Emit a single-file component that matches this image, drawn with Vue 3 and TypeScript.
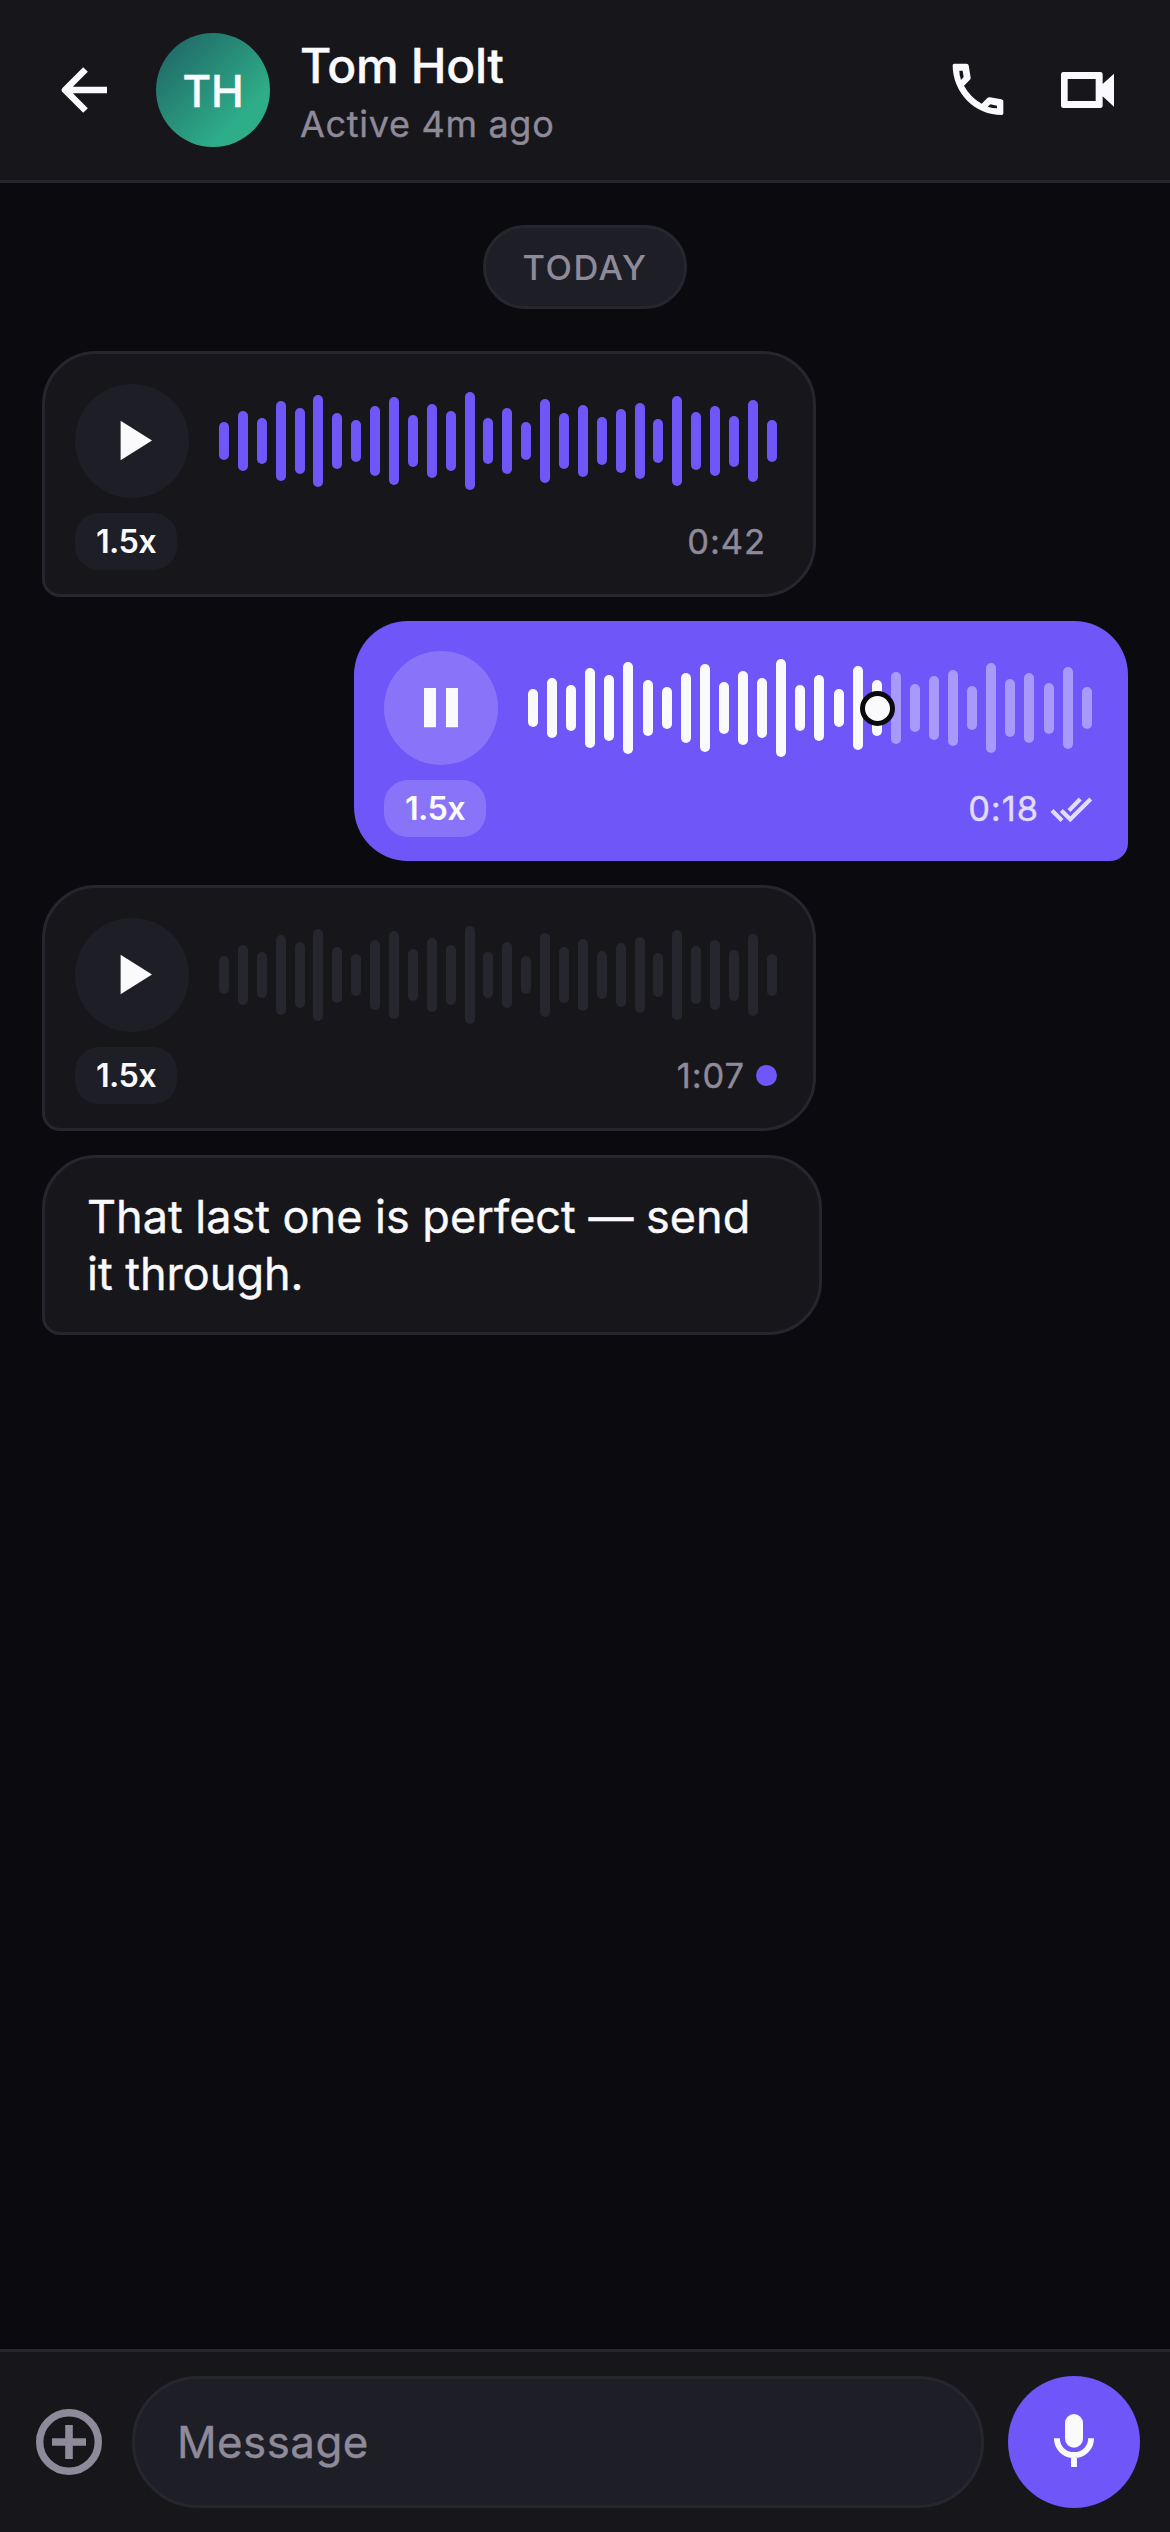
<script setup lang="ts">
interface VoiceMessage {
  id: number
  side: 'received' | 'sent'
  tone: 'accent' | 'progress' | 'muted'
  playing: boolean
  duration: string
  unread: boolean
  delivered: boolean
}

const waveform: number[] = [
  38, 60.7, 46.7, 79.3, 65.7, 92.7, 56.3, 42, 70.3, 88.3,
  51.7, 74.3, 60.7, 97.7, 46.7, 65.7, 38, 84, 56.3, 72.3,
  48.7, 63.3, 76, 43.3, 90.7, 58, 69.3, 51, 82.3, 41.7,
]

const playedBars = 19
const progress = 62

const messages: VoiceMessage[] = [
  { id: 1, side: 'received', tone: 'accent', playing: false, duration: '0:42', unread: false, delivered: false },
  { id: 2, side: 'sent', tone: 'progress', playing: true, duration: '0:18', unread: false, delivered: true },
  { id: 3, side: 'received', tone: 'muted', playing: false, duration: '1:07', unread: true, delivered: false },
]
</script>

<template>
  <div class="screen">
    <header class="header">
      <svg class="back" viewBox="0 0 72 72" aria-label="Back">
        <path d="M59 36H19M37.500 15.500L17 36l20.500 20.500" fill="none" stroke="currentColor" stroke-width="6.600" stroke-linejoin="round" />
      </svg>
      <div class="avatar">TH</div>
      <div class="contact">
        <div class="name">Tom Holt</div>
        <div class="status">Active 4m ago</div>
      </div>
      <div class="actions">
        <svg class="action" viewBox="126 102 216 216" aria-label="Call">
          <path fill="currentColor" fill-rule="evenodd" d="M163 131H200Q205 131 206 136L212 173Q212.500 177 209 180L192 197Q211 232 245 251L262 234Q265 231 270 232L304 238Q310 239 310 244V280Q310 285 305 285A147 149 0 0 1 158 136Q158 131 163 131ZM178 152H188L191 171L183 180Q178 166 178 152ZM263 260L271 253L291 257V265Q277 265 263 260Z" />
        </svg>
        <svg class="action" viewBox="450 102 216 216" aria-label="Video call">
          <path fill="currentColor" fill-rule="evenodd" d="M490 156H601Q608 156 608 163V192L642 161V260L608 229V257Q608 264 601 264H490Q483 264 483 257V163Q483 156 490 156ZM503 177V243H587V177Z" />
        </svg>
      </div>
    </header>

    <main class="thread">
      <div class="day">TODAY</div>

      <article v-for="m in messages" :key="m.id" class="voice" :class="[m.side, m.tone]">
        <div class="player">
          <div class="toggle">
            <svg v-if="m.playing" viewBox="0 0 72 72">
              <path d="M19 16h12v39.300H19zM41 16h12v39.300H41z" fill="currentColor" />
            </svg>
            <svg v-else viewBox="0 0 72 72">
              <path d="M24.600 15.700V55.300L56 35.500z" fill="currentColor" />
            </svg>
          </div>
          <div class="wave">
            <span
              v-for="(h, i) in waveform"
              :key="i"
              class="bar"
              :class="{ rest: m.tone === 'progress' && i >= playedBars }"
              :style="{ height: h + 'px' }"
            />
            <span v-if="m.tone === 'progress'" class="knob" :style="{ left: progress + '%' }" />
          </div>
        </div>
        <div class="meta">
          <span class="speed">1.5x</span>
          <span class="info">
            <span class="time">{{ m.duration }}</span>
            <i v-if="m.unread" class="dot" />
            <svg v-else-if="m.delivered" class="ticks" viewBox="0 0 42 42">
              <path d="M2 22.500L12 32.500M11.300 22.500L20.300 31.300L40.700 11M19 22.500L30.300 11" fill="none" stroke="currentColor" stroke-width="4.200" />
            </svg>
            <i v-else class="none" />
          </span>
        </div>
      </article>

      <article class="text-bubble">That last one is perfect — send it through.</article>
    </main>

    <footer class="composer">
      <svg class="attach" viewBox="0 0 66 66" aria-label="Attach">
        <circle cx="33" cy="33" r="29.300" fill="none" stroke="currentColor" stroke-width="7.400" />
        <path d="M33 16V50M16 33H50" stroke="currentColor" stroke-width="7.600" />
      </svg>
      <div class="field">Message</div>
      <div class="mic">
        <svg viewBox="0 0 72 72">
          <rect x="27" y="8" width="18" height="33.700" rx="9" fill="currentColor" />
          <path d="M18.900 32.300C18.900 42 26.500 49 36 49S53.100 42 53.100 32.300M36 49V61" fill="none" stroke="currentColor" stroke-width="5.900" />
        </svg>
      </div>
    </footer>
  </div>
</template>

<style>
body {
  margin: 0;
  background: #0a0a0f;
}
</style>

<style scoped>
.screen {
  display: flex;
  flex-direction: column;
  width: 1170px;
  height: 2532px;
  background: #0a0a0f;
  color: #fafafc;
  font-family: Inter, "Liberation Sans", sans-serif;
  -webkit-text-stroke: 0.4px currentColor;
}

.header {
  display: flex;
  align-items: center;
  height: 180px;
  padding: 0 48px;
  background: #16161b;
  border-bottom: 3px solid #26262e;
}

.back {
  width: 72px;
  height: 72px;
}

.avatar {
  display: flex;
  align-items: center;
  justify-content: center;
  box-sizing: border-box;
  width: 114px;
  height: 114px;
  margin-left: 36px;
  padding-top: 2px;
  border-radius: 50%;
  background: linear-gradient(135deg, #1f5f63 0%, #2eae88 75%);
  font-size: 44px;
  font-weight: 500;
  letter-spacing: -0.3px;
}

.contact {
  flex: 1;
  margin-top: 8px;
  margin-left: 30px;
}

.name {
  font-size: 48px;
  line-height: 60px;
  font-weight: 500;
  letter-spacing: -0.3px;
}

.status {
  font-size: 36px;
  line-height: 56px;
  letter-spacing: 0.7px;
  color: #8e8a99;
}

.actions {
  display: flex;
  gap: 36px;
}

.action {
  width: 72px;
  height: 72px;
}

.thread {
  display: flex;
  flex: 1;
  flex-direction: column;
  align-items: flex-start;
  gap: 24px;
  padding: 42px;
}

.day {
  align-self: center;
  box-sizing: border-box;
  height: 84px;
  width: 204px;
  margin-bottom: 18px;
  border: 3px solid #26262e;
  border-radius: 42px;
  background: #1e1e26;
  color: #8e8a99;
  font-size: 34.5px;
  line-height: 79px;
  font-weight: 500;
  letter-spacing: 0.045em;
  text-align: center;
  -webkit-text-stroke-width: 0;
}

.voice {
  box-sizing: border-box;
  width: 774px;
  padding: 30px 36px 24px 30px;
  border-radius: 54px 54px 54px 18px;
}

.received {
  background: #16161b;
  border: 3px solid #26262e;
}

.sent {
  align-self: flex-end;
  border-radius: 54px 54px 18px 54px;
  background: #6e56f8;
}

.player {
  display: flex;
  align-items: center;
  gap: 30px;
}

.toggle {
  display: flex;
  align-items: center;
  justify-content: center;
  flex: none;
  width: 114px;
  height: 114px;
  border-radius: 50%;
  background: #1e1e26;
}

.toggle svg,
.mic svg {
  width: 72px;
  height: 72px;
}

.sent .toggle,
.sent .speed {
  background: #8974f9;
}

.wave {
  position: relative;
  display: flex;
  flex: 1;
  align-items: center;
  justify-content: space-between;
}

.bar {
  width: 10px;
  border-radius: 5px;
  background: #6e56f8;
}

.muted .bar {
  background: #26262e;
}

.progress .bar {
  background: #fafafc;
}

.progress .bar.rest {
  background: #a899fb;
}

.knob {
  position: absolute;
  top: 50%;
  box-sizing: border-box;
  width: 35px;
  height: 35px;
  margin: -17.5px 0 0 -17.5px;
  border: 5px solid #0a0a0f;
  border-radius: 50%;
  background: #fafafc;
}

.meta {
  display: flex;
  align-items: center;
  justify-content: space-between;
  margin-top: 15px;
}

.speed {
  width: 102px;
  height: 57px;
  border-radius: 24px;
  background: #1e1e26;
  font-size: 32.4px;
  line-height: 57px;
  font-weight: 600;
  letter-spacing: -0.6px;
  text-align: center;
  -webkit-text-stroke-width: 0;
}

.info {
  display: flex;
  align-items: center;
  gap: 12px;
  color: #8e8a99;
}

.sent .info {
  color: #e2ddfe;
}

.time {
  margin-right: -0.9px;
  font-size: 34.5px;
  line-height: 57px;
  letter-spacing: 0.9px;
}

.dot {
  width: 21px;
  height: 21px;
  border-radius: 50%;
  background: #6e56f8;
}

.ticks {
  width: 42px;
  height: 42px;
}

.text-bubble {
  box-sizing: border-box;
  width: 780px;
  padding: 30px 42px;
  border: 3px solid #26262e;
  border-radius: 54px 54px 54px 18px;
  background: #16161b;
  font-size: 45px;
  line-height: 57px;
}

.composer {
  display: flex;
  align-items: center;
  height: 180px;
  padding: 0 30px 0 36px;
  background: #16161b;
  border-top: 3px solid #26262e;
}

.attach {
  flex: none;
  width: 66px;
  height: 66px;
  color: #8e8a99;
}

.field {
  box-sizing: border-box;
  flex: 1;
  height: 132px;
  margin: 0 24px 0 30px;
  padding-left: 42px;
  border: 3px solid #26262e;
  border-radius: 66px;
  background: #1e1e26;
  color: #8e8a99;
  font-size: 43.8px;
  line-height: 128px;
  letter-spacing: 0.5px;
}

.mic {
  display: flex;
  align-items: center;
  justify-content: center;
  width: 132px;
  height: 132px;
  border-radius: 50%;
  background: #6e56f8;
}
</style>
